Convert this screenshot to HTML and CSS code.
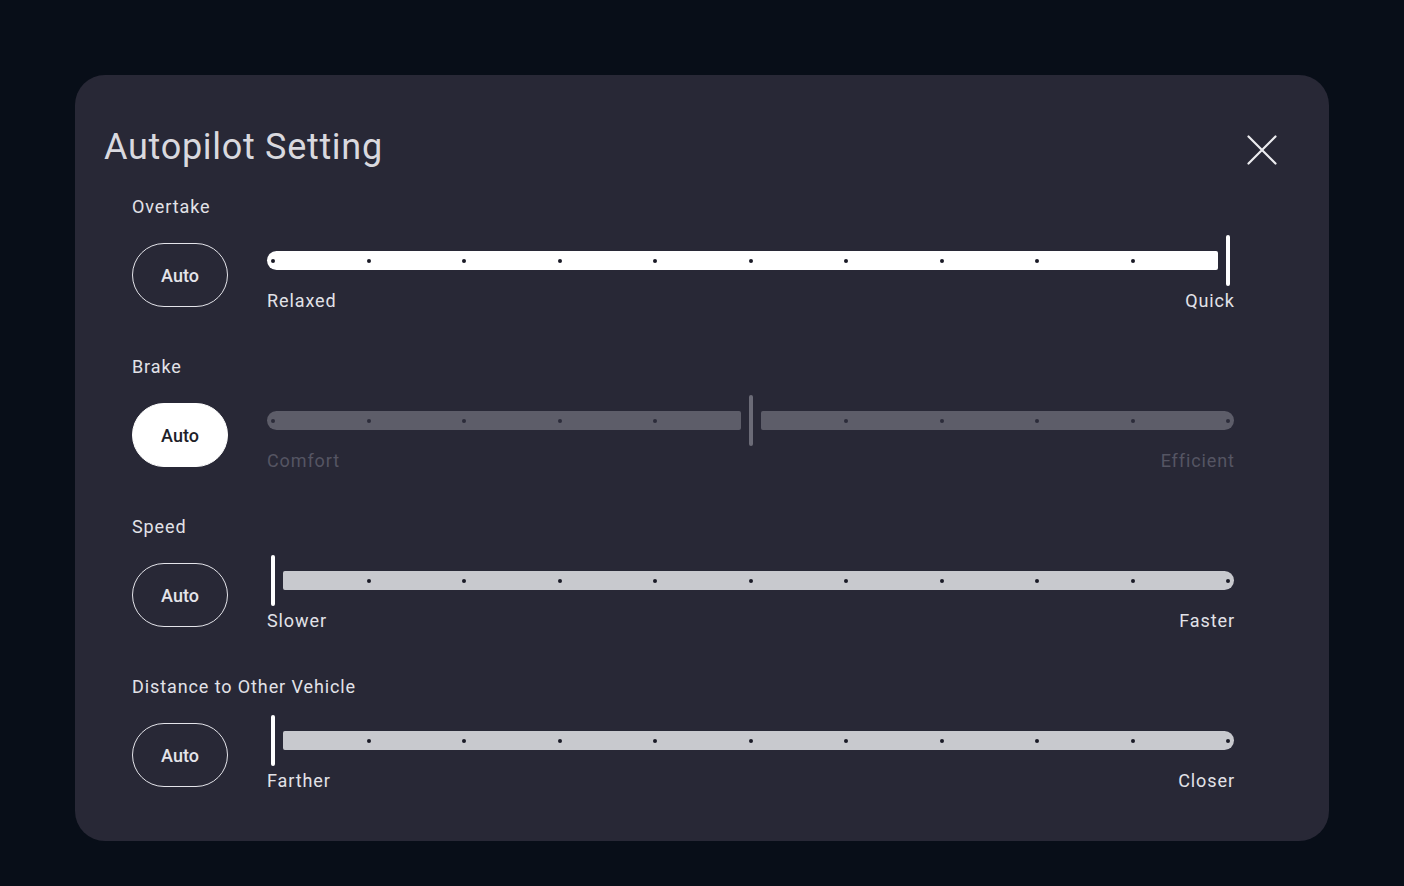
FILE: index.html
```html
<!DOCTYPE html>
<html lang="en">
<head>
<meta charset="UTF-8">
<title>Autopilot Setting</title>
<link rel="stylesheet" href="styles.css">
</head>
<body>

<div class="card">
    <div class="card-head">
        <h1 class="title">Autopilot Setting</h1>
        <button class="close-btn" aria-label="Close">
            <svg width="30" height="30" viewBox="0 0 30 30">
                <path d="M1.5 1.5 L28.5 28.5 M28.5 1.5 L1.5 28.5" stroke="#ececf0" stroke-width="2.2" stroke-linecap="round" fill="none"/>
            </svg>
        </button>
    </div>

    <!-- Overtake -->
    <div class="setting">
        <div class="setting-name">Overtake</div>
        <div class="setting-row">
            <button class="auto-btn">Auto</button>
            <div class="slider">
                <div class="track" style="--v:10">
                    <div class="seg seg-active"></div>
                    <div class="seg seg-rest"></div>
                    <div class="ticks"><span></span><span></span><span></span><span></span><span></span><span></span><span></span><span></span><span></span><span></span><span></span></div>
                    <div class="thumb"></div>
                </div>
                <div class="slider-labels"><span>Relaxed</span><span>Quick</span></div>
            </div>
        </div>
    </div>

    <!-- Brake (auto on) -->
    <div class="setting is-auto">
        <div class="setting-name">Brake</div>
        <div class="setting-row">
            <button class="auto-btn">Auto</button>
            <div class="slider">
                <div class="track" style="--v:5">
                    <div class="seg seg-active"></div>
                    <div class="seg seg-rest"></div>
                    <div class="ticks"><span></span><span></span><span></span><span></span><span></span><span></span><span></span><span></span><span></span><span></span><span></span></div>
                    <div class="thumb"></div>
                </div>
                <div class="slider-labels"><span>Comfort</span><span>Efficient</span></div>
            </div>
        </div>
    </div>

    <!-- Speed -->
    <div class="setting">
        <div class="setting-name">Speed</div>
        <div class="setting-row">
            <button class="auto-btn">Auto</button>
            <div class="slider">
                <div class="track" style="--v:0">
                    <div class="seg seg-active"></div>
                    <div class="seg seg-rest"></div>
                    <div class="ticks"><span></span><span></span><span></span><span></span><span></span><span></span><span></span><span></span><span></span><span></span><span></span></div>
                    <div class="thumb"></div>
                </div>
                <div class="slider-labels"><span>Slower</span><span>Faster</span></div>
            </div>
        </div>
    </div>

    <!-- Distance -->
    <div class="setting">
        <div class="setting-name">Distance to Other Vehicle</div>
        <div class="setting-row">
            <button class="auto-btn">Auto</button>
            <div class="slider">
                <div class="track" style="--v:0">
                    <div class="seg seg-active"></div>
                    <div class="seg seg-rest"></div>
                    <div class="ticks"><span></span><span></span><span></span><span></span><span></span><span></span><span></span><span></span><span></span><span></span><span></span></div>
                    <div class="thumb"></div>
                </div>
                <div class="slider-labels"><span>Farther</span><span>Closer</span></div>
            </div>
        </div>
    </div>
</div>

</body>
</html>
```

FILE: styles.css
```css
/* Page */
html, body {
    margin: 0;
    padding: 0;
    height: 100%;
    background: #080e18;
    font-family: Roboto, "Noto Sans", sans-serif;
    color: #e4e4ea;
}

/* Dialog card */
.card {
    box-sizing: border-box;
    width: 1254px;
    height: 766px;
    margin: 75px 0 0 75px;
    padding: 50px 52px 50px 29px;
    background: #282836;
    border-radius: 30px;
}

.card-head {
    display: flex;
    justify-content: space-between;
    align-items: flex-start;
    height: 44px;
    margin-bottom: 27px;
}

.title {
    margin: 0;
    font-size: 36px;
    line-height: 44px;
    font-weight: 400;
    color: #d9d9df;
    letter-spacing: 0.7px;
}

.close-btn {
    margin-top: 10px;
    padding: 0;
    border: 0;
    background: none;
    width: 30px;
    height: 30px;
    cursor: pointer;
}

.close-btn svg {
    display: block;
}

/* One setting block */
.setting {
    padding: 0 43px 0 28px;
    margin-bottom: 44px;
}

.setting:last-child {
    margin-bottom: 0;
}

.setting-name {
    font-size: 18px;
    line-height: 22px;
    letter-spacing: 0.9px;
    color: #e2e2e8;
    margin-bottom: 17px;
}

.setting-row {
    display: flex;
    align-items: flex-start;
    gap: 39px;
}

.auto-btn {
    box-sizing: border-box;
    flex: none;
    width: 96px;
    height: 64px;
    margin-top: 8px;
    border: 1px solid #e4e4ea;
    border-radius: 32px;
    background: transparent;
    color: #e4e4ea;
    font-family: Roboto, sans-serif;
    font-size: 18px;
    font-weight: 500;
    cursor: pointer;
}

.is-auto .auto-btn {
    background: #ffffff;
    border-color: #ffffff;
    color: #1e1e2a;
}

/* Slider */
.slider {
    flex: 1;
}

.track {
    position: relative;
    height: 51px;
    /* distance between first and last tick centres */
    --span: calc(100% - 12px);
}

.seg {
    position: absolute;
    top: 16px;
    height: 19px;
}

.seg-active {
    left: 0;
    width: calc(var(--v) * var(--span) / 10 - 4px);
    background: #ffffff;
    border-radius: 10px 2px 2px 10px;
}

.seg-rest {
    left: calc(16px + var(--v) * var(--span) / 10);
    right: 0;
    background: #c8c9ce;
    border-radius: 2px 10px 10px 2px;
}

.ticks {
    position: absolute;
    left: 0;
    right: 0;
    top: 16px;
    height: 19px;
    padding: 0 4px;
    display: flex;
    justify-content: space-between;
    align-items: center;
}

.ticks span {
    width: 4px;
    height: 4px;
    border-radius: 50%;
    background: #1a1a26;
}

.thumb {
    position: absolute;
    top: 0;
    left: calc(4px + var(--v) * var(--span) / 10);
    width: 4px;
    height: 51px;
    border-radius: 2px;
    background: #ffffff;
}

.slider-labels {
    display: flex;
    justify-content: space-between;
    margin-top: 4px;
    font-size: 18px;
    line-height: 22px;
    letter-spacing: 0.9px;
    color: #e2e2e8;
}

.slider-labels span:last-child {
    margin-right: -0.9px;
}

/* auto mode: slider greyed out */
.is-auto .seg {
    background: #5d5d69;
}

.is-auto .ticks span {
    background: #2c2c3a;
}

.is-auto .thumb {
    background: #6b6b77;
}

.is-auto .slider-labels {
    color: #555563;
}
```
